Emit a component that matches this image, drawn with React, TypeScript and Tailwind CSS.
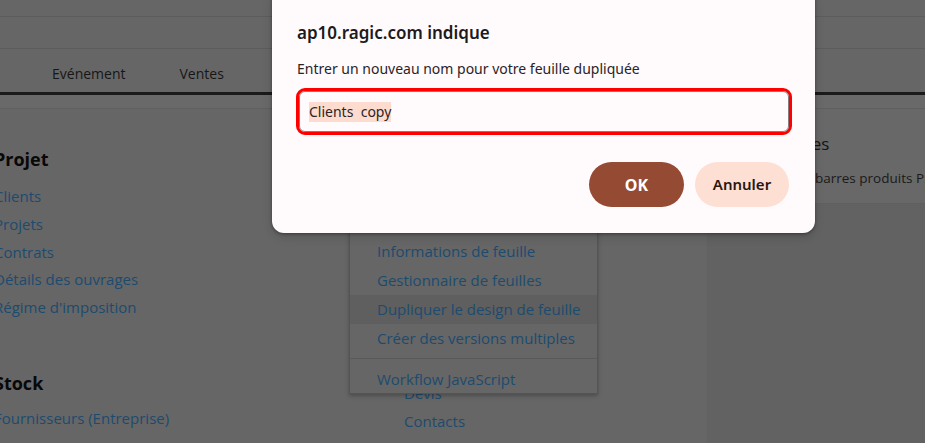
import React from "react";

const link = "text-[#1d4b6e]";

export default function App() {
  return (
    <div
      className="relative w-[925px] h-[443px] overflow-hidden bg-[#666666]"
      style={{ fontFamily: '"Open Sans", "Noto Sans", sans-serif' }}
    >
      {/* header bars */}
      <div className="h-[17px] border-b border-[#5c5c5c]" />
      <div className="h-[32px] border-b border-[#5c5c5c]" />
      <div className="h-[43px] pt-[5px] flex items-center text-[14px] text-[#161616]">
        <span className="ml-[52px]">Evénement</span>
        <span className="ml-[54px]">Ventes</span>
      </div>
      <div className="h-[3px] bg-[#1a1a1a]" />
      <div className="h-[14px] bg-[#696969] border-b border-[#606060]" />

      {/* content */}
      <div className="flex h-[335px]">
        {/* left column */}
        <div className="shrink-0 w-[355px] -ml-[6px] pt-[36px] flex flex-col">
          <div className="text-[18px] font-bold leading-[28px] text-[#080808]">Projet</div>
          <div className={`mt-[10px] flex flex-col text-[15px] leading-[27.75px] ${link}`}>
            <span>Clients</span>
            <span>Projets</span>
            <span>Contrats</span>
            <span>Détails des ouvrages</span>
            <span>Régime d'imposition</span>
          </div>
          <div className="mt-[47px] text-[18px] font-bold leading-[28px] text-[#080808]">Stock</div>
          <div className={`mt-[8px] text-[15px] leading-[27.75px] ${link}`}>Fournisseurs (Entreprise)</div>
        </div>
        {/* middle column */}
        <div className={`shrink-0 w-[357px] pl-[55px] pt-[271px] flex flex-col text-[15px] leading-[27.75px] ${link}`}>
          <span>Devis</span>
          <span>Contacts</span>
        </div>
        {/* right column */}
        <div className="flex-1 min-w-0 bg-[#626262] border-l border-[#656565]">
          <div className="h-[95px] bg-[#686868] border-b border-[#606060] pt-[22px] whitespace-nowrap overflow-hidden">
            <div className="text-[17px] leading-[26px] text-[#141414] ml-[3px]">Pages récentes</div>
            <div className="mt-[11px] text-[13.5px] leading-[20px] text-[#1a1a1a] ml-[72px]">Code barres produits P5 stock</div>
          </div>
        </div>
      </div>

      {/* dropdown menu */}
      <div className="absolute left-[349px] top-[200px] w-[249px] h-[194px] bg-[#666666] border border-[#545454] shadow-[0_2px_4px_rgba(0,0,0,0.25)]">
        <div className={`pt-[36px] flex flex-col text-[15px] ${link}`}>
          <div className="h-[29px] leading-[29px] pl-[27px]">Informations de feuille</div>
          <div className="h-[29px] leading-[29px] pl-[27px]">Gestionnaire de feuilles</div>
          <div className="h-[29px] leading-[29px] pl-[27px] bg-[#5f5f5f]">Dupliquer le design de feuille</div>
          <div className="h-[29px] leading-[29px] pl-[27px]">Créer des versions multiples</div>
          <div className="mt-[5px] border-t border-[#595959]" />
          <div className="h-[34px] leading-[34px] pl-[27px] pt-[3px]">Workflow JavaScript</div>
        </div>
      </div>

      {/* dialog */}
      <div
        className="absolute left-[272px] top-[-12px] w-[543px] h-[245px] rounded-[12px] bg-[#fffbfd] shadow-[0_1px_3px_rgba(0,0,0,0.35),0_4px_10px_rgba(0,0,0,0.15)] pl-[25px] pr-[23px]"
        style={{ fontFamily: '"Noto Sans", "Open Sans", sans-serif' }}
      >
        <div className="pt-[30px] text-[17px] font-semibold leading-[30px] text-[#201a1b]">ap10.ragic.com indique</div>
        <div className="mt-[10px] text-[14px] leading-[22px] text-[#2b2325]">
          Entrer un nouveau nom pour votre feuille dupliquée
        </div>
        <div className="mt-[8px] -ml-[1px] h-[47px] rounded-[9px] border-[3px] border-[#ff0000] flex items-center">
          <div className="w-full h-full rounded-[6px] border border-[#8a7c7e] flex items-center pl-[9px]">
            <span className="bg-[#fddccf] text-[14px] leading-[20px] text-[#2a2426] whitespace-pre">Clients  copy</span>
          </div>
        </div>
        <div className="mt-[27px] flex justify-end gap-[11px] pr-[3px]">
          <button className="w-[95px] h-[45px] rounded-full bg-[#954a33] text-white text-[16px] font-bold">OK</button>
          <button className="w-[94px] h-[45px] rounded-full bg-[#fddfd3] text-[#2a160f] text-[15px] font-semibold">Annuler</button>
        </div>
      </div>
    </div>
  );
}
